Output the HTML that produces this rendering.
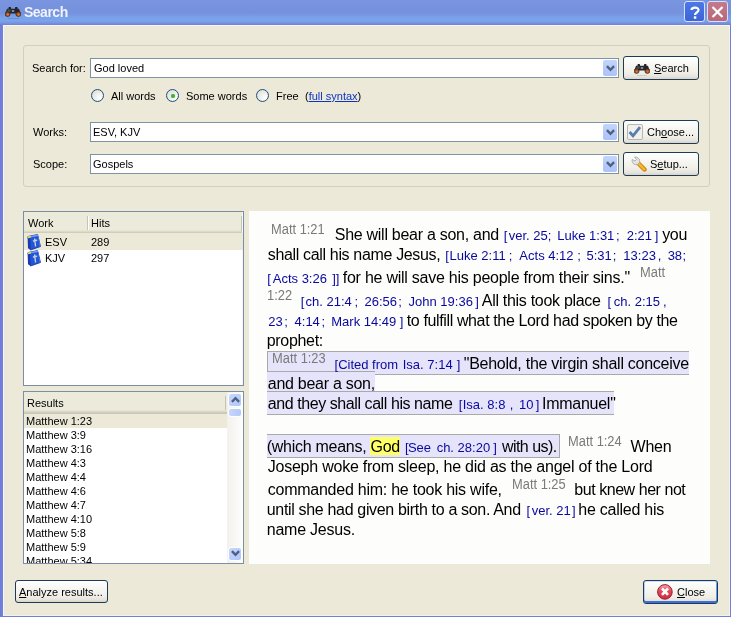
<!DOCTYPE html>
<html><head><meta charset="utf-8">
<style>
*{margin:0;padding:0;box-sizing:border-box}
html,body{width:731px;height:617px;overflow:hidden;background:#ece9d8}
body{position:relative;font-family:"Liberation Sans",sans-serif;font-size:11px;color:#000}
.abs{position:absolute}
#title{position:absolute;left:0;top:0;width:731px;height:25px;background:linear-gradient(to bottom,#7b96e0 0px,#7893de 6px,#7691dd 13px,#7ba0e7 17px,#76a5ee 21px,#7a92dc 23px,#6f80d6 25px)}
#frameL{position:absolute;left:0;top:24px;width:3px;height:593px;background:linear-gradient(to right,#6d7cd6,#7484dc)}
#frameR{position:absolute;left:730px;top:24px;width:1px;height:593px;background:#6f80d8}
#frameB{position:absolute;left:0;top:616px;width:731px;height:1px;background:#6f80d8}
#client{position:absolute;left:3px;top:25px;width:727px;height:591px;background:#ece9d8;border-left:1px solid #f6f6fb;border-top:1px solid #f6f6fb;border-right:1px solid #f3f1ea;border-bottom:1px solid #f3f1ea}
#ttl{position:absolute;left:24px;top:4px;font-size:14px;font-weight:bold;color:#eef2fc;white-space:pre;letter-spacing:-0.5px}
.tbtn{position:absolute;top:1px;width:21px;height:21px;border:1px solid #d8e0fa;border-radius:3px}
.grp{position:absolute;left:23px;top:45px;width:687px;height:142px;border:1px solid #d0d0bf;border-radius:3px}
.lbl{position:absolute;white-space:pre;line-height:13px}
.tb{position:absolute;background:#fff;border:1px solid #7f93a8}
.tb span{position:absolute;white-space:pre;line-height:13px}
.dd{position:absolute;width:14px;height:16px;border-radius:2px;background:linear-gradient(to bottom,#c4d4fc,#b8cbf8 50%,#adc2f6);}
.dd svg{position:absolute;left:3px;top:4.5px}
.btn{position:absolute;border:1px solid #1e3a5a;border-radius:3px;background:linear-gradient(to bottom,#ffffff 0%,#f8f8f4 30%,#f0efe9 70%,#e6e3da 90%,#d8d2c6 100%)}
.btn span{position:absolute;white-space:pre;line-height:13px}
.radio{position:absolute;width:13px;height:13px;border-radius:50%;border:1px solid #1c5180;background:radial-gradient(circle at 70% 70%,#ffffff 0%,#f0efea 40%,#d8d6cc 100%)}
.list{position:absolute;background:#fff;border:1px solid #7b8ea3}
.hdr{position:absolute;left:0;top:0;height:22px;background:linear-gradient(to bottom,#ebeadb 0px,#ebeadb 18px,#e2e0d0 19px,#d6d3c2 20px,#cbc7b8 21px)}
.ri{position:absolute;left:0;width:203px;height:14px;white-space:pre}
#pane{position:absolute;left:249px;top:211px;width:461px;height:353px;background:#fdfdfb}
.b,.v,.r{position:absolute;white-space:pre;line-height:normal}
.b{font-size:16px;color:#000;letter-spacing:-0.27px}
.v{font-size:14px;color:#7a7a7a;transform:scaleX(0.92);transform-origin:0 0}
.r{font-size:13px;color:#0808a0}
.qb{position:absolute;background:#e6e4fa;border-top:1px solid #a9a9a9;border-bottom:1px solid #a9a9a9}
u{text-decoration:underline}
.sb{position:absolute;left:203px;top:0px;width:17px;height:171px;background:linear-gradient(to right,#f3f1ec,#fefefe)}
.sbb{position:absolute;left:1px;width:14px;height:14px;border-radius:3px;border:1px solid #fff;background:linear-gradient(135deg,#c8d8fc,#b0c6f8)}
.sbb svg{position:absolute;left:2px;top:2px}
</style></head><body>
<div id="wrap" style="position:absolute;left:0;top:0;width:731px;height:617px;will-change:transform">
<div id="title"></div>
<div id="frameL"></div><div id="frameR"></div><div id="frameB"></div>
<div id="client"></div>
<div class="abs" style="left:5px;top:7px;height:10px"><svg width="16" height="10" viewBox="0 0 16 10"><rect x="3.5" y="0" width="2.5" height="2.2" rx="0.8" fill="#1a1e24"/><rect x="10" y="0" width="2.5" height="2.2" rx="0.8" fill="#1a1e24"/><path d="M2 1.8 L14 1.8 L15.6 6.5 L0.4 6.5 Z" fill="#23272d"/><path d="M3 2.5 L6 2.5 L5 5 L2 5 Z" fill="#4a5058"/><rect x="6.8" y="3.2" width="2.4" height="1.6" fill="#9aa0a8"/><ellipse cx="2.6" cy="7.1" rx="2.5" ry="2.4" fill="#a04e1a" stroke="#1c1410" stroke-width="0.6"/><ellipse cx="13.4" cy="7.1" rx="2.5" ry="2.4" fill="#a04e1a" stroke="#1c1410" stroke-width="0.6"/><ellipse cx="2.8" cy="7.6" rx="1.2" ry="1.1" fill="#d8783a"/><ellipse cx="13.6" cy="7.6" rx="1.2" ry="1.1" fill="#d8783a"/></svg></div>
<div class="abs" style="left:8px;top:18px;width:11px;height:1px;background:#5c78c0;opacity:0.5"></div>
<div id="ttl">Search</div>
<div class="tbtn" style="left:684px;background:linear-gradient(to bottom,#4c78e8,#3a64d8)"><svg style="position:absolute;left:5px;top:4px" width="10" height="13" viewBox="0 0 10 13"><path d="M1.5 4 C1.5 1 8.5 0.5 8.5 4 C8.5 6.5 5 6.5 5 9" fill="none" stroke="#fff" stroke-width="2.2"/><rect x="3.8" y="10.3" width="2.5" height="2.5" fill="#fff"/></svg></div>
<div class="tbtn" style="left:707px;background:linear-gradient(to bottom,#c47a8a,#b86878)"><svg style="position:absolute;left:3px;top:4px" width="13" height="12" viewBox="0 0 13 12"><path d="M1.5 1 L11.5 11 M11.5 1 L1.5 11" stroke="#fff" stroke-width="2.2"/></svg></div>

<div class="grp"></div>
<div class="lbl" style="left:32px;top:62px">Search for:</div>
<div class="tb" style="left:90px;top:58px;width:529px;height:20px"><span style="left:3px;top:3px">God loved</span></div>
<div class="dd" style="left:603px;top:60px"><svg width="9" height="7" viewBox="0 0 9 7"><path d="M0.9 1.2 L4.5 4.8 L8.1 1.2" fill="none" stroke="#4d6185" stroke-width="2.4"/></svg></div>
<div class="btn" style="left:623px;top:56px;width:76px;height:24px"><div class="abs" style="left:10px;top:6.5px;height:10px"><svg width="16" height="10" viewBox="0 0 16 10"><rect x="3.5" y="0" width="2.5" height="2.2" rx="0.8" fill="#1a1e24"/><rect x="10" y="0" width="2.5" height="2.2" rx="0.8" fill="#1a1e24"/><path d="M2 1.8 L14 1.8 L15.6 6.5 L0.4 6.5 Z" fill="#23272d"/><path d="M3 2.5 L6 2.5 L5 5 L2 5 Z" fill="#4a5058"/><rect x="6.8" y="3.2" width="2.4" height="1.6" fill="#9aa0a8"/><ellipse cx="2.6" cy="7.1" rx="2.5" ry="2.4" fill="#a04e1a" stroke="#1c1410" stroke-width="0.6"/><ellipse cx="13.4" cy="7.1" rx="2.5" ry="2.4" fill="#a04e1a" stroke="#1c1410" stroke-width="0.6"/><ellipse cx="2.8" cy="7.6" rx="1.2" ry="1.1" fill="#d8783a"/><ellipse cx="13.6" cy="7.6" rx="1.2" ry="1.1" fill="#d8783a"/></svg></div><div class="abs" style="left:13px;top:18px;width:10px;height:1px;background:#c8c4b4;opacity:0.7"></div><span style="left:30px;top:5px"><u>S</u>earch</span></div>

<div class="radio" style="left:91px;top:89px"></div>
<div class="lbl" style="left:111px;top:90px">All words</div>
<div class="radio" style="left:166px;top:89px"><div style="position:absolute;left:3.5px;top:3.5px;width:4px;height:4px;border-radius:50%;background:#3cb43c;box-shadow:0 0 1px #5ad05a"></div></div>
<div class="lbl" style="left:186px;top:90px">Some words</div>
<div class="radio" style="left:256px;top:89px"></div>
<div class="lbl" style="left:276px;top:90px">Free</div>
<div class="lbl" style="left:305px;top:90px">(<u style="color:#0b34c4">full syntax</u>)</div>

<div class="lbl" style="left:33px;top:126px">Works:</div>
<div class="tb" style="left:90px;top:122px;width:529px;height:20px"><span style="left:2px;top:3px">ESV, KJV</span></div>
<div class="dd" style="left:603px;top:124px"><svg width="9" height="7" viewBox="0 0 9 7"><path d="M0.9 1.2 L4.5 4.8 L8.1 1.2" fill="none" stroke="#4d6185" stroke-width="2.4"/></svg></div>
<div class="btn" style="left:623px;top:120px;width:76px;height:24px"><div class="abs" style="left:3px;top:3px"><svg width="16" height="16" viewBox="0 0 16 16"><rect x="0.5" y="0.5" width="15" height="15" rx="1.5" fill="#f0f0ec" stroke="#b8b8b0"/><path d="M2.6 8 L6 11.8 L13 3.2" fill="none" stroke="#5c7cb0" stroke-width="2.8"/></svg></div><span style="left:23px;top:5px">Ch<u>o</u>ose...</span></div>

<div class="lbl" style="left:33px;top:158px">Scope:</div>
<div class="tb" style="left:90px;top:154px;width:529px;height:20px"><span style="left:2px;top:3px">Gospels</span></div>
<div class="dd" style="left:603px;top:156px"><svg width="9" height="7" viewBox="0 0 9 7"><path d="M0.9 1.2 L4.5 4.8 L8.1 1.2" fill="none" stroke="#4d6185" stroke-width="2.4"/></svg></div>
<div class="btn" style="left:623px;top:152px;width:76px;height:24px"><div class="abs" style="left:7px;top:3px"><svg width="16" height="16" viewBox="0 0 16 16"><path d="M7.5 7.5 L13.5 13.5" stroke="#c8780c" stroke-width="4.4" stroke-linecap="round"/><path d="M7.5 7.5 L13.3 13.3" stroke="#f6b828" stroke-width="2.6" stroke-linecap="round"/><path d="M1.2 3.5 C0.5 6.5 3 9.5 6.5 8.5 L8.5 6.5 C9.5 3 6.5 0.5 3.5 1.2 L5.5 3.5 L4 5 Z" fill="#e4e4e4" stroke="#a0a0a0" stroke-width="0.8"/></svg></div><span style="left:26px;top:5px">S<u>e</u>tup...</span></div>

<div class="list" style="left:23px;top:211px;width:221px;height:175px">
 <div class="hdr" style="width:219px"></div>
 <div class="abs" style="left:63px;top:4px;width:1px;height:14px;background:#c7c5b2"></div>
 <div class="abs" style="left:64px;top:4px;width:1px;height:14px;background:#fff"></div>
 <div class="abs" style="left:217px;top:4px;width:1px;height:15px;background:#c7c5b2"></div><div class="abs" style="left:218px;top:0px;width:1px;height:173px;background:#f4f8fc"></div>
 <div class="lbl" style="left:4px;top:5px">Work</div>
 <div class="lbl" style="left:67px;top:5px">Hits</div>
 <div class="abs" style="left:0;top:21px;width:219px;height:17px;background:#ece9d8"></div>
 <div class="abs" style="left:3px;top:22px"><svg width="14" height="17" viewBox="0 0 14 17"><path d="M1 2.5 L10.5 0.5 L13.5 12.5 L3.5 16 Z" fill="#2256d8" stroke="#12309a" stroke-width="0.8"/><path d="M0.6 2.8 L3.2 3.4 L3.6 16 L1 14.2 Z" fill="#1a3ab0"/><path d="M1 2.5 L10.5 0.5 L11.5 2 L3 3.6 Z" fill="#7aa0f0"/><path d="M0.8 2.6 L3.6 2 L4 3.4 L1.2 4.2 Z" fill="#e8e050"/><path d="M7.6 4.5 L8.6 12.5 M5.9 7 L10.2 6.3" stroke="#c8d0dc" stroke-width="1.4"/><path d="M11.5 2 L13.5 12.5 L12.6 12.8 L10.8 2.4 Z" fill="#4a7ae8"/></svg></div>
 <div class="lbl" style="left:21px;top:24px">ESV</div>
 <div class="lbl" style="left:67px;top:24px">289</div>
 <div class="abs" style="left:3px;top:38px"><svg width="14" height="17" viewBox="0 0 14 17"><path d="M1 2.5 L10.5 0.5 L13.5 12.5 L3.5 16 Z" fill="#2256d8" stroke="#12309a" stroke-width="0.8"/><path d="M0.6 2.8 L3.2 3.4 L3.6 16 L1 14.2 Z" fill="#1a3ab0"/><path d="M1 2.5 L10.5 0.5 L11.5 2 L3 3.6 Z" fill="#7aa0f0"/><path d="M0.8 2.6 L3.6 2 L4 3.4 L1.2 4.2 Z" fill="#e8e050"/><path d="M7.6 4.5 L8.6 12.5 M5.9 7 L10.2 6.3" stroke="#c8d0dc" stroke-width="1.4"/><path d="M11.5 2 L13.5 12.5 L12.6 12.8 L10.8 2.4 Z" fill="#4a7ae8"/></svg></div>
 <div class="lbl" style="left:21px;top:40px">KJV</div>
 <div class="lbl" style="left:67px;top:40px">297</div>
</div>

<div class="list" style="left:23px;top:391px;width:221px;height:173px;overflow:hidden">
 <div class="hdr" style="width:203px"></div>
 <div class="abs" style="left:201px;top:4px;width:1px;height:14px;background:#c7c5b2"></div>
 <div class="lbl" style="left:3px;top:5px">Results</div>
 <div class="sb">
  <div class="sbb" style="top:1px"><svg width="9" height="7" viewBox="0 0 9 7"><path d="M0.9 5.8 L4.5 2.2 L8.1 5.8" fill="none" stroke="#4d6185" stroke-width="2.4"/></svg></div>
  <div class="sbb" style="top:16px;height:9px;background:linear-gradient(to right,#c6d6fc,#b4c8f8)"></div>
  <div class="sbb" style="top:155px"><svg width="9" height="7" viewBox="0 0 9 7"><path d="M0.9 1.2 L4.5 4.8 L8.1 1.2" fill="none" stroke="#4d6185" stroke-width="2.4"/></svg></div>
 </div>
</div>
<div class="abs" style="left:24px;top:0px;width:203px;height:563px;overflow:hidden;clip-path:inset(413px 0 0 0)">
<div class="ri" style="top:414px;background:#ece9d8;"><span style="position:absolute;left:2px;top:1px;line-height:13px">Matthew 1:23</span></div>
<div class="ri" style="top:428px;"><span style="position:absolute;left:2px;top:1px;line-height:13px">Matthew 3:9</span></div>
<div class="ri" style="top:442px;"><span style="position:absolute;left:2px;top:1px;line-height:13px">Matthew 3:16</span></div>
<div class="ri" style="top:456px;"><span style="position:absolute;left:2px;top:1px;line-height:13px">Matthew 4:3</span></div>
<div class="ri" style="top:470px;"><span style="position:absolute;left:2px;top:1px;line-height:13px">Matthew 4:4</span></div>
<div class="ri" style="top:484px;"><span style="position:absolute;left:2px;top:1px;line-height:13px">Matthew 4:6</span></div>
<div class="ri" style="top:498px;"><span style="position:absolute;left:2px;top:1px;line-height:13px">Matthew 4:7</span></div>
<div class="ri" style="top:512px;"><span style="position:absolute;left:2px;top:1px;line-height:13px">Matthew 4:10</span></div>
<div class="ri" style="top:526px;"><span style="position:absolute;left:2px;top:1px;line-height:13px">Matthew 5:8</span></div>
<div class="ri" style="top:540px;"><span style="position:absolute;left:2px;top:1px;line-height:13px">Matthew 5:9</span></div>
<div class="ri" style="top:554px;"><span style="position:absolute;left:2px;top:1px;line-height:13px">Matthew 5:34</span></div>

</div>

<div id="pane">
</div>
<div class="abs" style="left:0;top:0">
<div class="qb" style="left:267px;top:351px;width:422px;height:24px;border-left:1px solid #a9a9a9"></div>
<div class="qb" style="left:267px;top:371px;width:108px;height:21px"></div>
<div class="qb" style="left:267px;top:391px;width:347px;height:24px"></div>
<div class="qb" style="left:267px;top:434px;width:293px;height:24px;border-right:1px solid #a9a9a9;box-sizing:border-box"></div>
<div style="position:absolute;left:370px;top:437px;width:30px;height:18px;background:#ffff66"></div>
<span class="v" style="left:270.75px;top:221px">Matt 1:21</span>
<span class="b" style="left:334.75px;top:226px;letter-spacing:-0.277px">She will bear a son, and</span>
<span class="r" style="left:503.75px;top:228px">[</span>
<span class="r" style="left:508.75px;top:228px">ver. 25</span>
<span class="r" style="left:547.75px;top:228px">;</span>
<span class="r" style="left:557.25px;top:228px">Luke 1:31</span>
<span class="r" style="left:616.05px;top:228px">;</span>
<span class="r" style="left:626.75px;top:228px">2:21</span>
<span class="r" style="left:654.75px;top:228px">]</span>
<span class="b" style="left:662.15px;top:226px">you</span>
<span class="b" style="left:267.75px;top:246px;letter-spacing:-0.339px">shall call his name Jesus,</span>
<span class="r" style="left:445.25px;top:248px">[</span>
<span class="r" style="left:449.55px;top:248px">Luke 2:11</span>
<span class="r" style="left:508.75px;top:248px">;</span>
<span class="r" style="left:519.35px;top:248px">Acts 4:12</span>
<span class="r" style="left:577.15px;top:248px">;</span>
<span class="r" style="left:586.45px;top:248px">5:31</span>
<span class="r" style="left:612.75px;top:248px">;</span>
<span class="r" style="left:623.35px;top:248px">13:23</span>
<span class="r" style="left:657.75px;top:248px">,</span>
<span class="r" style="left:667.65px;top:248px">38</span>
<span class="r" style="left:682.55px;top:248px">;</span>
<span class="r" style="left:267.25px;top:271px">[</span>
<span class="r" style="left:272.75px;top:271px">Acts 3:26</span>
<span class="r" style="left:332.25px;top:271px">]</span>
<span class="r" style="left:335.75px;top:271px">]</span>
<span class="b" style="left:342.75px;top:269px;letter-spacing:-0.247px">for he will save his people from their sins."</span>
<span class="v" style="left:639.75px;top:264px">Matt</span>
<span class="v" style="left:266.75px;top:287px">1:22</span>
<span class="r" style="left:300.75px;top:294px">[</span>
<span class="r" style="left:305.55px;top:294px">ch. 21:4</span>
<span class="r" style="left:354.45px;top:294px">;</span>
<span class="r" style="left:364.55px;top:294px">26:56</span>
<span class="r" style="left:398.15px;top:294px">;</span>
<span class="r" style="left:408.55px;top:294px">John 19:36</span>
<span class="r" style="left:475.25px;top:294px">]</span>
<span class="b" style="left:481.75px;top:292px;letter-spacing:-0.295px">All this took place</span>
<span class="r" style="left:607.55px;top:294px">[</span>
<span class="r" style="left:613.75px;top:294px">ch. 2:15</span>
<span class="r" style="left:663.05px;top:294px">,</span>
<span class="r" style="left:268.35px;top:314px">23</span>
<span class="r" style="left:284.35px;top:314px">;</span>
<span class="r" style="left:294.55px;top:314px">4:14</span>
<span class="r" style="left:321.55px;top:314px">;</span>
<span class="r" style="left:331.25px;top:314px">Mark 14:49</span>
<span class="r" style="left:399.65px;top:314px">]</span>
<span class="b" style="left:406.75px;top:312px;letter-spacing:-0.371px">to fulfill what the Lord had spoken by the</span>
<span class="b" style="left:266.75px;top:332px;letter-spacing:-0.324px">prophet:</span>
<span class="v" style="left:271.75px;top:350px">Matt 1:23</span>
<span class="r" style="left:334.55px;top:357px">[Cited from</span>
<span class="r" style="left:402.75px;top:357px">Isa. 7:14</span>
<span class="r" style="left:456.75px;top:357px">]</span>
<span class="b" style="left:463.75px;top:355px">"Behold, the virgin shall conceive</span>
<span class="b" style="left:267.75px;top:375px">and bear a son,</span>
<span class="b" style="left:267.75px;top:395px;letter-spacing:-0.424px">and they shall call his name</span>
<span class="r" style="left:458.75px;top:397px">[</span>
<span class="r" style="left:462.75px;top:397px">Isa. 8:8</span>
<span class="r" style="left:509.75px;top:397px">,</span>
<span class="r" style="left:519.05px;top:397px">10</span>
<span class="r" style="left:535.75px;top:397px">]</span>
<span class="b" style="left:542.05px;top:395px">Immanuel"</span>
<span class="b" style="left:266.75px;top:438px">(which means, God</span>
<span class="r" style="left:404.95px;top:440px">[</span>
<span class="r" style="left:407.95px;top:440px">See</span>
<span class="r" style="left:436.65px;top:440px">ch. 28:20</span>
<span class="r" style="left:493.25px;top:440px">]</span>
<span class="b" style="left:501.95px;top:438px;letter-spacing:-0.541px">with us).</span>
<span class="v" style="left:567.75px;top:433px">Matt 1:24</span>
<span class="b" style="left:630.55px;top:438px">When</span>
<span class="b" style="left:267.75px;top:458px;letter-spacing:-0.235px">Joseph woke from sleep, he did as the angel of the Lord</span>
<span class="b" style="left:267.75px;top:481px;letter-spacing:-0.247px">commanded him: he took his wife,</span>
<span class="v" style="left:511.75px;top:476px">Matt 1:25</span>
<span class="b" style="left:574.25px;top:481px;letter-spacing:-0.450px">but knew her not</span>
<span class="b" style="left:266.75px;top:501px;letter-spacing:-0.330px">until she had given birth to a son. And</span>
<span class="r" style="left:526.55px;top:503px">[</span>
<span class="r" style="left:531.75px;top:503px">ver. 21</span>
<span class="r" style="left:571.95px;top:503px">]</span>
<span class="b" style="left:578.35px;top:501px;letter-spacing:-0.254px">he called his</span>
<span class="b" style="left:266.75px;top:521px;letter-spacing:-0.227px">name Jesus.</span>
</div>

<div class="btn" style="left:15px;top:580px;width:93px;height:23px"><span style="left:3px;top:5px"><u>A</u>nalyze results...</span></div>
<div class="btn" style="left:643px;top:580px;width:75px;height:24px;box-shadow:inset 0 1px 0 #cde0fc, inset 0 -2px 0 #3f6ed8, inset 1px 0 0 #b8d0f8, inset -1px 0 0 #6a98ea"><div class="abs" style="left:13px;top:3px"><svg width="16" height="16" viewBox="0 0 16 16"><defs><linearGradient id="cg" x1="0" y1="0" x2="0" y2="1"><stop offset="0" stop-color="#f2a8b0"/><stop offset="0.45" stop-color="#e04858"/><stop offset="1" stop-color="#d02c40"/></linearGradient></defs><circle cx="7.9" cy="7.9" r="7.3" fill="url(#cg)" stroke="#9c1a2c" stroke-width="1"/><path d="M5 4.5 L11 10.8 M11 4.5 L5 10.8" stroke="#fff" stroke-width="2.6"/></svg></div><span style="left:33px;top:5px"><u>C</u>lose</span></div>
</div>
</body></html>
